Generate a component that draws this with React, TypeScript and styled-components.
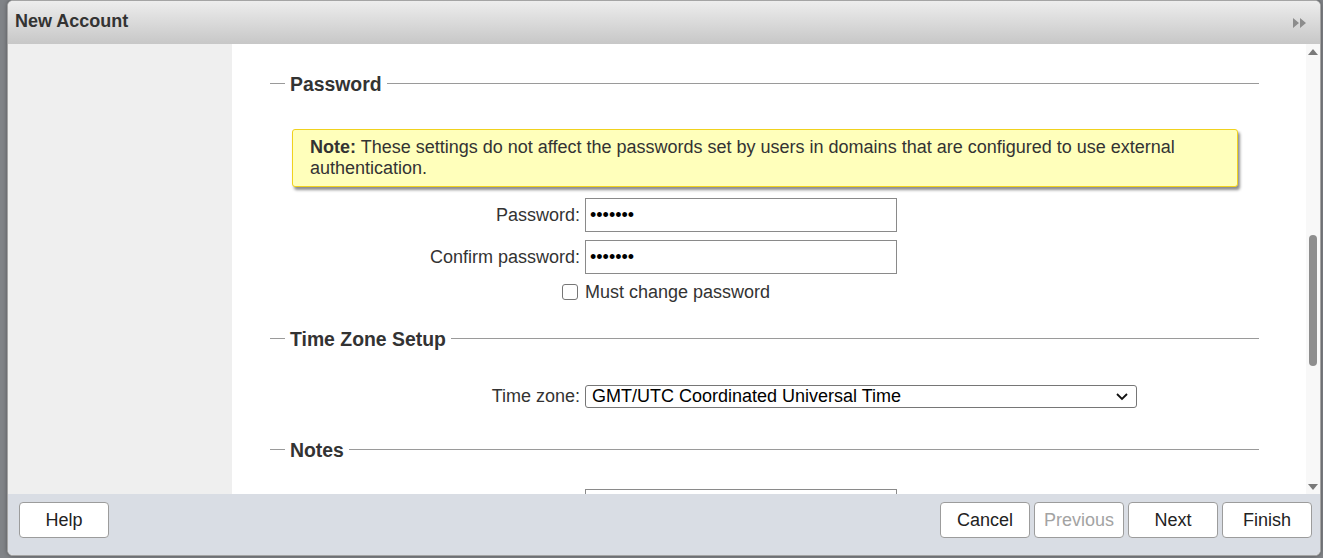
import React from "react";
import styled, { createGlobalStyle } from "styled-components";

const GlobalStyle = createGlobalStyle`
  html, body { margin: 0; padding: 0; }
  body {
    background: #808387;
    font-family: "Liberation Sans", Arial, sans-serif;
    overflow: hidden;
  }
`;

const Screen = styled.div`
  width: 1323px;
  height: 558px;
  box-sizing: border-box;
  padding: 0 2px 2px 7px;
  display: flex;
`;

const Dialog = styled.div`
  width: 1314px;
  height: 556px;
  box-sizing: border-box;
  border: 1px solid #a4a4a4;
  border-radius: 6px;
  overflow: hidden;
  display: flex;
  flex-direction: column;
  background: #fff;
  box-shadow: 0 0 4px rgba(0, 0, 0, 0.35);
`;

const Header = styled.div`
  height: 43px;
  flex: none;
  display: flex;
  align-items: center;
  justify-content: space-between;
  padding: 0 13px 0 7px;
  background: linear-gradient(#ededed, #c7c7c7);
`;

const Title = styled.div`
  font-size: 18px;
  font-weight: bold;
  color: #333;
  margin-top: -3px;
`;

const Body = styled.div`
  flex: 1;
  display: flex;
  min-height: 0;
`;

const SidePanel = styled.div`
  width: 224px;
  flex: none;
  background: #efefef;
`;

const Content = styled.div`
  flex: 1;
  overflow: hidden;
  padding: 28px 47px 0 38px;
  background: #fff;
`;

const Scrollbar = styled.div`
  width: 14px;
  flex: none;
  background: #f8f8f8;
  display: flex;
  flex-direction: column;
  align-items: center;
  justify-content: space-between;
  padding: 5px 0 4px;
  box-sizing: border-box;
`;

const Track = styled.div`
  flex: 1;
  width: 100%;
  display: flex;
  justify-content: center;
  padding-top: 180px;
`;

const Thumb = styled.div`
  width: 8px;
  height: 131px;
  border-radius: 4px;
  background: #8e8e8e;
`;

const SectionHead = styled.div<{ $mt?: number }>`
  display: flex;
  align-items: center;
  gap: 5px;
  margin-top: ${(p) => p.$mt ?? 0}px;
  height: 22px;
  &::before {
    content: "";
    width: 15px;
    height: 1px;
    background: #9a9a9a;
  }
  &::after {
    content: "";
    flex: 1;
    height: 1px;
    background: #9a9a9a;
  }
`;

const SectionTitle = styled.span`
  font-size: 19.4px;
  font-weight: bold;
  color: #333;
  line-height: 22px;
  margin-top: 2px;
`;

const Note = styled.div`
  margin: 35px 21px 0 22px;
  box-sizing: border-box;
  padding: 7px 17px;
  background: #ffffbb;
  border: 1px solid #f0d21e;
  border-radius: 3px;
  box-shadow: 2px 3px 3px rgba(0, 0, 0, 0.45);
  font-size: 18px;
  line-height: 21px;
  color: #333;
`;

const NoteLead = styled.b`
  font-weight: bold;
`;

const FormGrid = styled.div<{ $mt: number }>`
  display: grid;
  grid-template-columns: 310px auto;
  column-gap: 5px;
  row-gap: 8px;
  align-items: center;
  margin-top: ${(p) => p.$mt}px;
`;

const Label = styled.label`
  font-size: 18px;
  color: #333;
  text-align: right;
  white-space: nowrap;
`;

const CheckCell = styled.div`
  display: flex;
  justify-content: flex-end;
  align-items: center;
  padding-right: 2px;
  height: 24px;
  margin-top: -2px;
`;

const Check = styled.input`
  width: 16px;
  height: 16px;
  margin: 0;
  border: 1px solid #767676;
  border-radius: 3px;
  appearance: none;
  background: #fff;
`;

const CheckText = styled.span`
  font-size: 18px;
  color: #333;
  margin-top: -2px;
`;

const TextInput = styled.input`
  width: 312px;
  height: 34px;
  box-sizing: border-box;
  border: 1px solid #8a8a8a;
  padding: 0 4px;
  font-size: 18px;
  font-family: "Liberation Sans", Arial, sans-serif;
  color: #000;
  outline: none;
  margin: 0;
`;

const SelectWrap = styled.div`
  position: relative;
  width: 552px;
  height: 23px;
`;

const Select = styled.select`
  width: 100%;
  height: 23px;
  box-sizing: border-box;
  appearance: none;
  border: 1px solid #767676;
  border-radius: 3px;
  background: #fff;
  padding: 0 0 0 6px;
  margin: 0;
  font-size: 18px;
  font-family: "Liberation Sans", Arial, sans-serif;
  color: #000;
  line-height: 21px;
  outline: none;
`;

const Chevron = styled.svg`
  position: absolute;
  right: 9px;
  top: 8px;
  pointer-events: none;
`;

const NotesArea = styled.textarea`
  width: 312px;
  height: 60px;
  box-sizing: border-box;
  border: 1px solid #8a8a8a;
  margin: 0;
  resize: none;
`;

const Footer = styled.div`
  height: 61px;
  flex: none;
  box-sizing: border-box;
  background: #d9dde4;
  display: flex;
  align-items: flex-start;
  justify-content: space-between;
  padding: 8px 8px 0 11px;
`;

const ButtonGroup = styled.div`
  display: flex;
  gap: 4px;
`;

const Button = styled.button<{ $disabled?: boolean }>`
  width: 90px;
  height: 36px;
  box-sizing: border-box;
  border: 1px solid #9c9c9c;
  border-radius: 4px;
  background: #fff;
  font-size: 18px;
  font-family: "Liberation Sans", Arial, sans-serif;
  color: ${(p) => (p.$disabled ? "#a3a3a3" : "#222")};
  padding: 0;
  cursor: pointer;
`;

export default function App() {
  return (
    <>
      <GlobalStyle />
      <Screen>
        <Dialog>
          <Header>
            <Title>New Account</Title>
            <svg width="14" height="10" viewBox="0 0 14 10">
              <path d="M0 0 L6 5 L0 10 Z M7 0 L13 5 L7 10 Z" fill="#8c8c8c" />
            </svg>
          </Header>
          <Body>
            <SidePanel />
            <Content>
              <SectionHead>
                <SectionTitle>Password</SectionTitle>
              </SectionHead>
              <Note>
                <NoteLead>Note:</NoteLead> These settings do not affect the passwords set by users in
                domains that are configured to use external authentication.
              </Note>
              <FormGrid $mt={11}>
                <Label>Password:</Label>
                <TextInput type="password" defaultValue="1234567" />
                <Label>Confirm password:</Label>
                <TextInput type="password" defaultValue="1234567" />
                <CheckCell>
                  <Check type="checkbox" />
                </CheckCell>
                <CheckText>Must change password</CheckText>
              </FormGrid>
              <SectionHead $mt={23}>
                <SectionTitle>Time Zone Setup</SectionTitle>
              </SectionHead>
              <FormGrid $mt={36}>
                <Label>Time zone:</Label>
                <SelectWrap>
                  <Select defaultValue="utc">
                    <option value="utc">GMT/UTC Coordinated Universal Time</option>
                  </Select>
                  <Chevron width="12" height="8" viewBox="0 0 12 8">
                    <path d="M1 1 L6 6 L11 1" fill="none" stroke="#111" strokeWidth="1.8" />
                  </Chevron>
                </SelectWrap>
              </FormGrid>
              <SectionHead $mt={30}>
                <SectionTitle>Notes</SectionTitle>
              </SectionHead>
              <FormGrid $mt={29}>
                <span />
                <NotesArea />
              </FormGrid>
            </Content>
            <Scrollbar>
              <svg width="10" height="6" viewBox="0 0 10 6">
                <path d="M0 6 L5 0 L10 6 Z" fill="#7a7a7a" />
              </svg>
              <Track>
                <Thumb />
              </Track>
              <svg width="10" height="6" viewBox="0 0 10 6">
                <path d="M0 0 L5 6 L10 0 Z" fill="#7a7a7a" />
              </svg>
            </Scrollbar>
          </Body>
          <Footer>
            <Button>Help</Button>
            <ButtonGroup>
              <Button>Cancel</Button>
              <Button $disabled>Previous</Button>
              <Button>Next</Button>
              <Button>Finish</Button>
            </ButtonGroup>
          </Footer>
        </Dialog>
      </Screen>
    </>
  );
}
